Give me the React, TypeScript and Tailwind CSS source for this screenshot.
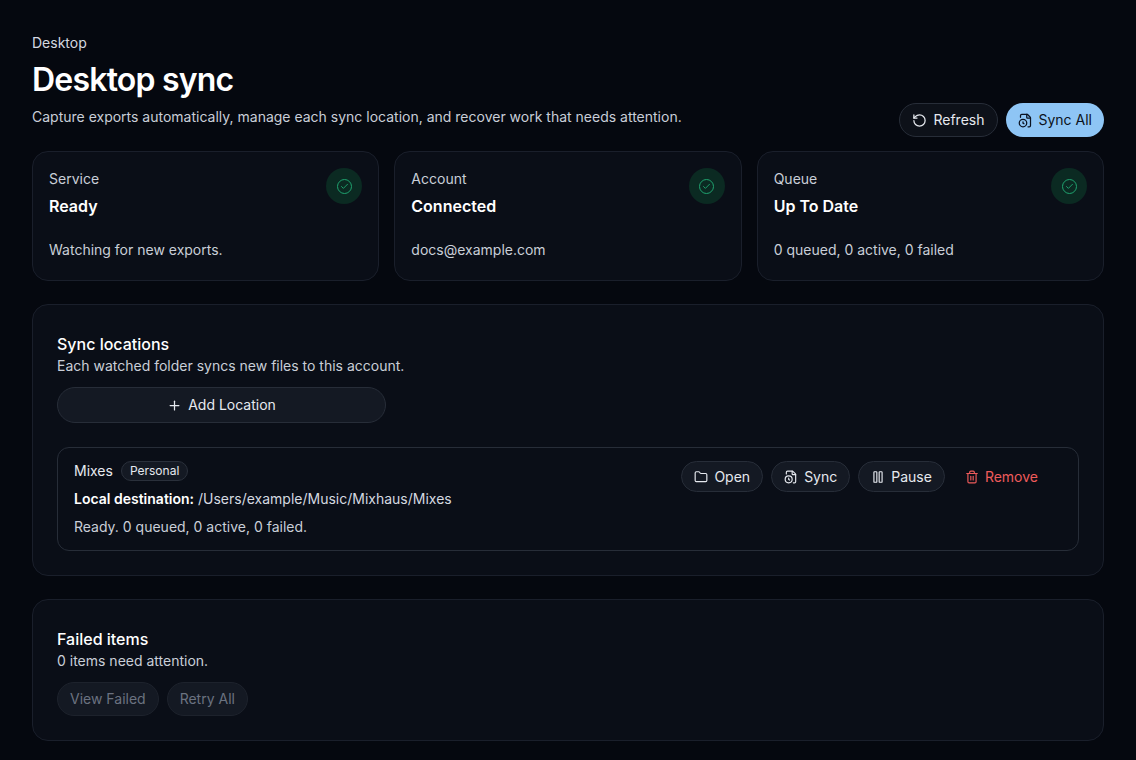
import { RotateCw, FileClock, Plus, Folder, Pause, Trash2, Check } from 'lucide-react';

const stats = [
  { label: 'Service', value: 'Ready', note: 'Watching for new exports.' },
  { label: 'Account', value: 'Connected', note: 'docs@example.com' },
  { label: 'Queue', value: 'Up To Date', note: '0 queued, 0 active, 0 failed' },
];

function StatCard({ label, value, note }: { label: string; value: string; note: string }) {
  return (
    <div className="relative rounded-2xl border border-[#1a1f2b] bg-[#0a0e17] px-4 pt-[17px] pb-5 h-[130px]">
      <p className="text-sm text-[#c9ced8]">{label}</p>
      <p className="mt-[5px] text-base font-semibold text-white">{value}</p>
      <p className="mt-[22px] text-sm text-[#c9ced8]">{note}</p>
      <div className="absolute right-4 top-4 w-9 h-9 rounded-full bg-[#0b2a22] flex items-center justify-center">
        <div className="w-[15px] h-[15px] rounded-full border border-[#1fa36f] flex items-center justify-center">
          <Check size={9} strokeWidth={2.5} className="text-[#1fa36f]" />
        </div>
      </div>
    </div>
  );
}

function Pill({ icon, children }: { icon: React.ReactNode; children: React.ReactNode }) {
  return (
    <button className="h-[31px] px-3 rounded-full border border-[#272d38] bg-[#141923] text-[#e6e9ef] text-sm flex items-center gap-1.5">
      {icon}
      {children}
    </button>
  );
}

export default function App() {
  return (
    <div className="min-h-screen bg-[#05080f] text-white px-8 pt-[33px] pb-8" style={{ fontFamily: 'Inter, "Noto Sans", sans-serif' }}>
      <div className="flex items-end justify-between">
        <div>
          <p className="text-sm text-[#d5d9e0]">Desktop</p>
          <h1 className="mt-[7px] text-[32px] leading-10 font-semibold tracking-tight">Desktop sync</h1>
          <p className="mt-[7px] text-sm text-[#c9ced8]">Capture exports automatically, manage each sync location, and recover work that needs attention.</p>
        </div>
        <div className="flex gap-2 mb-[-10px]">
          <button className="h-[34px] px-3 rounded-full border border-[#272d38] bg-[#0d1119] text-sm text-[#e6e9ef] flex items-center gap-1.5">
            <RotateCw size={15} className="-scale-x-100" /> Refresh
          </button>
          <button className="h-[34px] px-3 rounded-full bg-[#8ec5f5] text-sm text-[#0b1220] flex items-center gap-1.5">
            <FileClock size={15} /> Sync All
          </button>
        </div>
      </div>

      <div className="mt-[24px] grid grid-cols-3 gap-[15px]">
        {stats.map(s => <StatCard key={s.label} {...s} />)}
      </div>

      <div className="mt-[23px] rounded-2xl border border-[#1a1f2b] bg-[#0a0e17] px-6 pt-[27px] pb-6">
        <p className="text-base font-medium">Sync locations</p>
        <p className="text-sm text-[#c9ced8]">Each watched folder syncs new files to this account.</p>
        <button className="mt-[11px] w-[329px] h-[36px] rounded-full border border-[#272d38] bg-[#141923] text-sm text-[#e6e9ef] flex items-center justify-center gap-1.5">
          <Plus size={15} /> Add Location
        </button>
        <div className="mt-6 rounded-xl border border-[#272d38] px-4 py-[13px] flex justify-between">
          <div>
            <div className="flex items-center gap-2">
              <span className="text-sm text-[#e6e9ef]">Mixes</span>
              <span className="text-xs px-2 py-[1px] rounded-full border border-[#2a303b] bg-[#141923] text-[#e6e9ef]">Personal</span>
            </div>
            <p className="mt-[8px] text-sm text-[#d5d9e0]"><span className="font-semibold text-white">Local destination:</span> /Users/example/Music/Mixhaus/Mixes</p>
            <p className="mt-[8px] text-sm text-[#c9ced8]">Ready. 0 queued, 0 active, 0 failed.</p>
          </div>
          <div className="flex items-start gap-2 pr-3">
            <Pill icon={<Folder size={14} />}>Open</Pill>
            <Pill icon={<FileClock size={14} />}>Sync</Pill>
            <Pill icon={<Pause size={14} />}>Pause</Pill>
            <button className="h-[31px] px-3 text-sm text-[#ef5b5b] flex items-center gap-1.5">
              <Trash2 size={14} /> Remove
            </button>
          </div>
        </div>
      </div>

      <div className="mt-[23px] rounded-2xl border border-[#1a1f2b] bg-[#0a0e17] px-6 pt-[27px] pb-6">
        <p className="text-base font-medium">Failed items</p>
        <p className="text-sm text-[#c9ced8]">0 items need attention.</p>
        <div className="mt-[11px] flex gap-2">
          <button className="h-[34px] px-3 rounded-full bg-[#141923] border border-[#1d222c] text-sm text-[#6b7280]">View Failed</button>
          <button className="h-[34px] px-3 rounded-full bg-[#141923] border border-[#1d222c] text-sm text-[#6b7280]">Retry All</button>
        </div>
      </div>
    </div>
  );
}
